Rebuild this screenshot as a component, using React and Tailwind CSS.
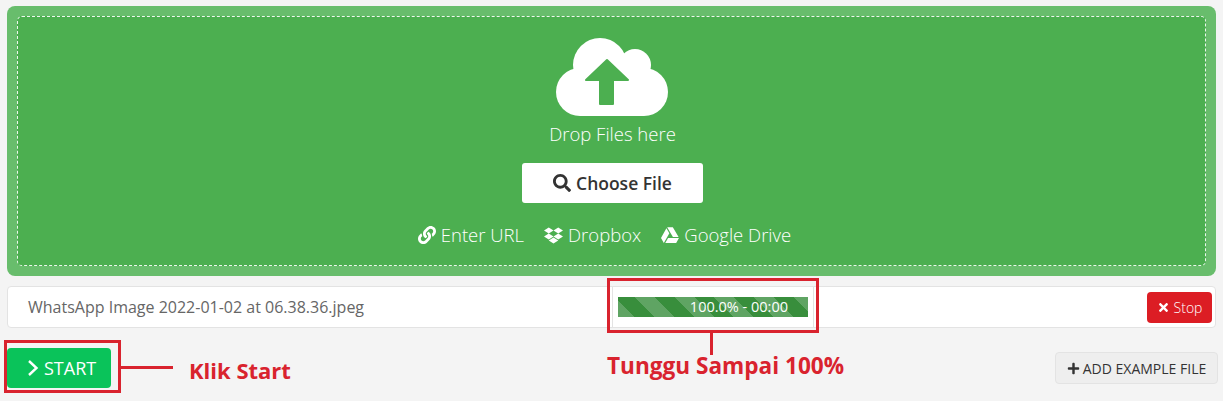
import React from "react";
import { FaSearch, FaLink, FaDropbox, FaGoogleDrive, FaTimes, FaPlus } from "react-icons/fa";

const font = "font-['Open_Sans',sans-serif]";

function Cloud() {
  return (
    <svg width="112" height="78" viewBox="0 0 112 78" className="block">
      <g fill="#fff">
        <circle cx="44" cy="27" r="27" />
        <circle cx="79" cy="27" r="16" />
        <circle cx="24" cy="54" r="24" />
        <circle cx="88" cy="54" r="24" />
        <rect x="24" y="30" width="64" height="48" />
      </g>
      <path
        d="M51 22 L30 42 H44 V66 H57 V42 H72 Z"
        fill="#4caf50"
        stroke="#4caf50"
        strokeWidth="2"
        strokeLinejoin="round"
      />
    </svg>
  );
}

function LinkItem({ icon, label }) {
  return (
    <span className="flex items-center gap-[5px]">
      {icon}
      <span>{label}</span>
    </span>
  );
}

export default function App() {
  return (
    <div className={`relative w-[1223px] h-[401px] overflow-hidden bg-[#f4f4f4] ${font}`}>
      <div className="px-[7px] pt-[6px] w-[1216px] box-content">
        {/* Drop area */}
        <div className="w-[1209px] h-[270px] rounded-[8px] bg-[#68bd6c] p-[10px]">
          <div className="h-[250px] rounded-[5px] border border-dashed border-white/90 bg-[#4caf50] flex flex-col items-center text-white pt-[21px]">
            <Cloud />
            <div className="mt-[6px] ml-[2px] text-[18.5px] leading-[24px] font-light">Drop Files here</div>
            <button className="mt-[17px] ml-[2px] w-[181px] h-[40px] rounded-[3px] bg-white text-[#333] text-[17.5px] font-semibold flex items-center justify-center gap-[5px]">
              <FaSearch className="w-[18px] h-[18px]" />
              Choose File
            </button>
            <div className="mt-[20px] mr-[14px] flex items-center gap-[20px] text-[18.5px] leading-[24px] font-light">
              <LinkItem icon={<FaLink className="w-[18px] h-[18px]" />} label="Enter URL" />
              <LinkItem icon={<FaDropbox className="w-[19px] h-[19px]" />} label="Dropbox" />
              <LinkItem icon={<FaGoogleDrive className="w-[18px] h-[18px]" />} label="Google Drive" />
            </div>
          </div>
        </div>

        {/* File row */}
        <div className="mt-[10px] w-[1209px] h-[42px] rounded-[4px] bg-white border border-[#e3e3e3] flex items-center">
          <div className="w-[604px] pl-[20px] text-[16px] text-[#666]">WhatsApp Image 2022-01-02 at 06.38.36.jpeg</div>
          <div className="w-[202px] h-full border-x border-[#e3e3e3] flex items-center justify-center">
            <div className="relative w-[190px] h-[20px] bg-[repeating-linear-gradient(45deg,#5fa463_0px,#5fa463_12px,#388e3c_12px,#388e3c_26px,#5fa463_26px,#5fa463_28px)] text-white text-[14.5px] leading-[20px] text-right pr-[20px]">
              100.0% - 00:00
            </div>
          </div>
          <div className="flex-1 flex justify-end pr-[3px]">
            <button className="w-[65px] h-[31px] rounded-[4px] bg-[#dc1d24] text-white text-[14px] font-light flex items-center justify-center gap-[4px]">
              <FaTimes className="w-[13px] h-[13px]" />
              Stop
            </button>
          </div>
        </div>

        {/* Actions */}
        <div className="mt-[20px] w-[1211px] flex items-center justify-between">
          <button className="w-[104px] h-[40px] rounded-[4px] bg-[#0ac35a] text-white text-[18px] flex items-center gap-[5px] pl-[20px]">
            <svg width="12" height="18" viewBox="0 0 12 18" fill="none" stroke="#fff" strokeWidth="2.4">
              <path d="M2 2 L9.5 9 L2 16" />
            </svg>
            START
          </button>
          <button className="w-[163px] h-[32px] rounded-[4px] bg-[#eeeeee] border border-[#e3e3e3] text-[#333] text-[14px] flex items-center justify-center gap-[3px]">
            <FaPlus className="w-[13px] h-[13px]" />
            ADD EXAMPLE FILE
          </button>
        </div>
      </div>

      {/* Annotations */}
      <div className="absolute left-[607px] top-[278px] w-[212px] h-[55px] border-[3px] border-[#d9232e]" />
      <div className="absolute left-[710px] top-[333px] w-[3px] h-[22px] bg-[#d9232e]" />
      <div className="absolute left-[607px] top-[351px] text-[22.6px] leading-[30px] font-bold text-[#d9232e] whitespace-nowrap">Tunggu Sampai 100%</div>
      <div className="absolute left-[4px] top-[340px] w-[117px] h-[53px] border-[3px] border-[#d9232e]" />
      <div className="absolute left-[121px] top-[366px] w-[52px] h-[3px] bg-[#d9232e]" />
      <div className="absolute left-[189px] top-[355px] text-[22px] leading-[30px] font-bold text-[#d9232e] whitespace-nowrap">Klik Start</div>
    </div>
  );
}
